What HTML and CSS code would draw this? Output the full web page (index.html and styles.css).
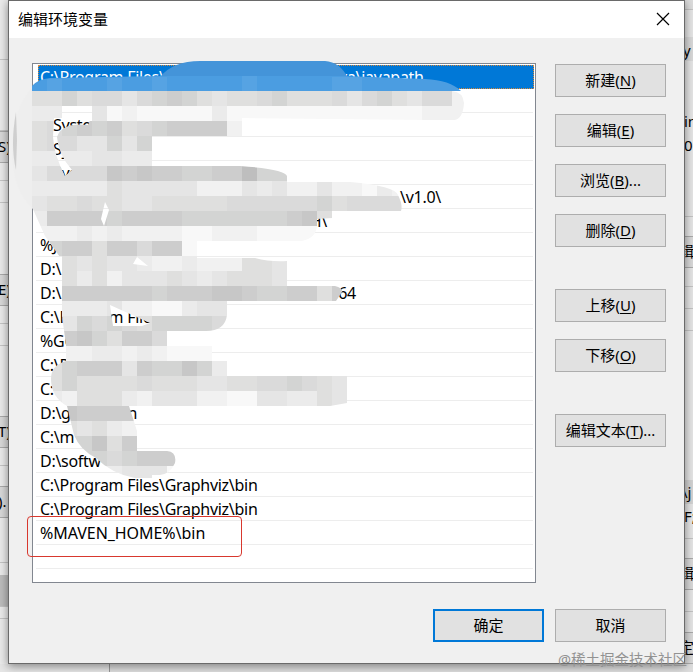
FILE: index.html
```html
<!DOCTYPE html>
<html lang="zh-CN">
<head>
  <meta charset="utf-8">
  <meta name="viewport" content="width=device-width">
  <title>编辑环境变量</title>
  <link rel="stylesheet" href="styles.css">
</head>
<body>
  <div class="desktop">
    <div class="behind left">
      <div class="h60"></div>
      <div class="h71"></div>
      <div class="btn-edge">S)</div>
      <div class="h18"></div>
      <div class="h22"></div>
      <div class="h71 last"></div>
      <div class="btn-edge">E)</div>
      <div class="h18"></div>
      <div class="h22"></div>
      <div class="h70 last"></div>
      <div class="btn-edge">T)</div>
      <div class="h18"></div>
      <div class="h20 last"></div>
      <div class="btn-edge">).</div>
      <div class="h45"></div>
      <div class="h12 last"></div>
      <div class="dark"></div>
      <div class="h12"></div>
    </div>

    <div class="dialog">
      <div class="titlebar">
        <h1>编辑环境变量</h1>
        <svg class="close" width="14" height="14" viewBox="0 0 14 14"><path d="M1 1L13 13M13 1L1 13"/></svg>
      </div>
      <div class="content">
        <ul class="list">
          <li class="selected">C:\Program Files\Common Files\Oracle\Java\javapath</li>
          <li></li>
          <li>%Systen</li>
          <li>%Sy</li>
          <li>%Sys</li>
          <li class="to-441">\v1.0\</li>
          <li class="to-327">H\</li>
          <li>%J</li>
          <li>D:\</li>
          <li class="to-356"><span>D:\</span>64</li>
          <li>C:\Program Files</li>
          <li>%GO</li>
          <li>C:\P</li>
          <li>C:\P</li>
          <li class="to-137"><span>D:\g</span>n</li>
          <li>C:\m</li>
          <li>D:\softw</li>
          <li>C:\Program Files\Graphviz\bin</li>
          <li>C:\Program Files\Graphviz\bin</li>
          <li class="maven">%MAVEN_HOME%\bin</li>
          <li></li>
        </ul>
        <div class="actions">
          <button>新建(<u>N</u>)</button>
          <button>编辑(<u>E</u>)</button>
          <button>浏览(<u>B</u>)...</button>
          <button>删除(<u>D</u>)</button>
          <button class="gap">上移(<u>U</u>)</button>
          <button>下移(<u>O</u>)</button>
          <button class="gap">编辑文本(<u>T</u>)...</button>
        </div>
      </div>
      <div class="footer">
        <button class="default">确定</button>
        <button>取消</button>
      </div>
    </div>

    <div class="behind right">
      <div class="h10"></div>
      <div class="h27 last"></div>
      <div class="field">y</div>
      <div class="lines"><span>in</span><span>0.</span></div>
      <div class="h19 last"></div>
      <div class="btn-edge cut">辑</div>
      <div class="h19"></div>
      <div class="h22"></div>
      <div class="h22"></div>
      <div class="lines low"><b>\j</b><span>F;</span></div>
      <div class="h19 last"></div>
      <div class="btn-edge cut">辑</div>
      <div class="h22"></div>
      <div class="h20 last"></div>
      <div class="btn-edge cut">定</div>
    </div>

    <div class="under"></div>
  </div>

  <svg class="mosaic" width="693" height="672" viewBox="0 0 693 672">
    <defs>
      <clipPath id="brush">
        <path clip-rule="evenodd" d="M32 91H452Q463 92 464 103Q463 118 455 120L430 120L242 118V136L152 136V166L240 166Q285 169 287 176V182L350 182Q395 186 398 195Q403 205 401 211H332V218L317 219V226Q316 238 302 241H197V258L255 258Q270 262 287 261V286H335Q343 288 342 292L336 301H227V315Q225 331 206 331H170V346H213V361H227V376H347V403L330 406H129L137 431V451H167Q177 452 175 463Q170 474 160 475H152V478H135Q112 474 96 458Q80 450 74 435L67 406Q51 397 51 379Q51 365 66 361V345L62 316V260L45 236L32 207Z
          M54 118H91L88 125Q62 122 57 137Q58 154 72 170L65 176Q54 155 53 137Z
          M105 202L109 210L104 226L101 219Z
          M110 305L150 323L142 326H113Z
          M137 257L133 264L148 266Z"/>
      </clipPath>
    </defs>
    <path class="halo" d="M32 88Q12 108 12 155Q13 190 33 209L38 205V88Z"/>
    <path class="smudge" d="M16 112Q10 145 16 170L17 140Z"/>
    <g id="cells" clip-path="url(#brush)"></g>
    <path class="blue-dark" d="M160 77Q173 61 200 61H325Q340 62 348 78Z"/>
    <path class="blue" d="M32 91V86Q38 79 50 78L160 76H345L425 79Q450 80 461 91Z"/>
    <path class="blue-light" d="M47 79h15v12h-15zM107 78h15v13h-15zM152 77h15v14h-15zM242 76h15v15h-15zM332 77h30v14h-30z"/>
  </svg>

  <div class="highlight"></div>
  <div class="watermark">@稀土掘金技术社区</div>

  <script>
    // one string per 15px row, 0 = darkest, 9 = lightest, '.' = empty
    const shades = ['#bebebe', '#c7c7c7', '#cdcdcd', '#d3d4d3', '#dadada', '#dfdfde', '#e5e5e5', '#ebebeb', '#f1f1f1', '#f8f8f8']
    const rows = [
      '55354464323565543555464356448',
      '77..6989999979999999999999888',
      '54323254322228...............',
      '54466363.....................',
      '77776677.....................',
      '64444121223322033............',
      '77777566666888676886889788...',
      '6554556655555444444354444....',
      '72222322223333333215.........',
      '88878788889988899999.........',
      '.3225224229..................',
      '..565667887888556............',
      '..575866656765556............',
      '..2222223222112332252........',
      '..77768899766................',
      '..63434533334................',
      '..2135224....................',
      '..8877878999.................',
      '.532226233137................',
      '.53555545556655443456........',
      '.78555786668899667756........',
      '..1222238....................',
      '..5657877....................',
      '..331523.....................',
      '..3334322288.................',
      '..777766699..................'
    ]
    const g = document.getElementById('cells')
    rows.forEach((row, y) => {
      [...row].forEach((c, x) => {
        if (c === '.') return
        const r = document.createElementNS('http://www.w3.org/2000/svg', 'rect')
        r.setAttribute('x', 32 + x * 15)
        r.setAttribute('y', 91 + y * 15)
        r.setAttribute('width', 15)
        r.setAttribute('height', 15)
        r.setAttribute('fill', shades[c])
        g.appendChild(r)
      })
    })
  </script>
</body>
</html>
```
FILE: styles.css
```css
* { box-sizing: border-box; }
body { margin: 0; width: 693px; height: 672px; overflow: hidden; position: relative; color: #000; font: 15px/24px "Noto Sans", "Noto Sans CJK SC", sans-serif; }
.desktop { display: grid; grid-template-columns: 8px 677px 8px; grid-template-rows: 664px 8px; height: 672px; background: #e6e6e6; }

.dialog { border: 1px solid #6a6a6a; background: #f0f0f0; box-shadow: 0 2px 9px rgba(0,0,0,.45); z-index: 1; }
.titlebar { display: flex; justify-content: space-between; height: 37px; padding: 6px 14px 0 9px; background: #fff; }
.titlebar h1 { margin: 0; font-size: 15px; font-weight: normal; line-height: 25px; }
.close { margin-top: 5px; fill: none; stroke: #000; stroke-width: 1.2; }
.content { display: flex; gap: 19px; padding: 25px 0 0 23px; }

.list { width: 504px; height: 520px; margin: 0; padding: 1px 2px 0 3px; list-style: none; border: 1px solid #828790; background: #fff; font-size: 16px; letter-spacing: -.28px; }
.list li { height: 24px; padding-left: 4px; border-bottom: 1px solid #ededed; white-space: nowrap; line-height: 24px; }
.list .selected { width: 496px; margin-left: 2px; background: #0078d7; color: #fff; border: 1px dotted #d88a3c; padding-left: 1px; line-height: 23px; }
.list .maven { letter-spacing: -.05px; }
.to-441, .to-327, .to-356, .to-137 { display: flex; justify-content: flex-end; }
.to-441 { padding-right: 92px; }
.to-327 { padding-right: 206px; }
.to-356 { padding-right: 177px; }
.to-137 { padding-right: 396px; }
.list span { margin-right: auto; }

.actions { display: flex; flex-direction: column; gap: 17px; padding-top: 1px; }
button { width: 111px; height: 33px; padding: 0 0 2px; border: 1px solid #adadad; background: #e1e1e1; color: #000; font: inherit; }
u { text-underline-offset: 2px; text-decoration-thickness: 1px; }
.gap { margin-top: 25px; }
.footer { display: flex; gap: 11px; justify-content: flex-end; padding: 26px 18px 0 0; }
.default { border: 2px solid #0078d7; }

/* slivers of the windows behind */
.behind { overflow: hidden; background: #ebebeb; white-space: nowrap; }
.behind > div { border-bottom: 1px solid #c4c4c4; }
.behind > .last { border-bottom: 0; }
.behind > .btn-edge { height: 32px; border-top: 1px solid #aaa; border-bottom: 1px solid #aaa; background: #d9d9d9; line-height: 28px; }
.left .btn-edge { margin-left: -2px; }
.cut { text-indent: -6px; }
.h10 { height: 10px; background: #ddd; }
.h12 { height: 12px; }
.h18 { height: 18px; }
.h19 { height: 19px; }
.h20 { height: 20px; }
.h22 { height: 22px; }
.h27 { height: 27px; }
.h45 { height: 45px; }
.h60 { height: 60px; }
.h70 { height: 70px; }
.h71 { height: 71px; }
.dark { height: 32px; background: #bdbdbd; }
.right { background: #e6e6e6; }
.right > .field { height: 24px; background: #d9d9d9; border: 0; text-indent: -2px; line-height: 26px; }
.lines { display: flex; flex-direction: column; height: 156px; padding-top: 48px; }
.lines.low { height: 208px; padding-top: 149px; }
.lines b { font-weight: normal; background: #d3d3d3; text-indent: -3px; }
.lines span { text-indent: -1px; }
.under { grid-column: 1 / -1; margin-left: 109px; border-left: 1px solid #999; background: #dedede; }

.mosaic { position: absolute; left: 0; top: 0; z-index: 2; }
.halo { fill: #eeeeee; }
.smudge { fill: #cfcfcf; }
.blue { fill: #4b9de1; }
.blue-dark { fill: #4494d9; }
.blue-light { fill: #62aae6; opacity: .5; }
.highlight { position: absolute; left: 27px; top: 516px; width: 215px; height: 41px; border: 1px solid #d8382e; border-radius: 4px; z-index: 3; }
.watermark { position: absolute; left: 558px; top: 647px; z-index: 3; color: #929292; font-size: 14.5px; white-space: nowrap; }
```
